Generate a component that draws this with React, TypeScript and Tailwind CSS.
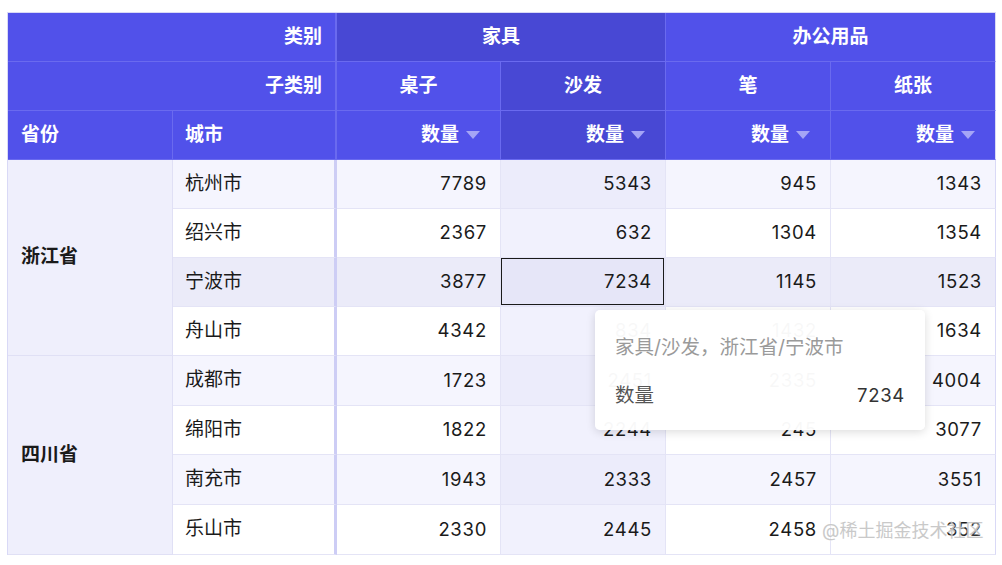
import React from 'react';

type City = { name: string; vals: number[] };
type Province = { name: string; cities: City[] };

const data: Province[] = [
  {
    name: '浙江省',
    cities: [
      { name: '杭州市', vals: [7789, 5343, 945, 1343] },
      { name: '绍兴市', vals: [2367, 632, 1304, 1354] },
      { name: '宁波市', vals: [3877, 7234, 1145, 1523] },
      { name: '舟山市', vals: [4342, 834, 1432, 1634] },
    ],
  },
  {
    name: '四川省',
    cities: [
      { name: '成都市', vals: [1723, 2451, 2335, 4004] },
      { name: '绵阳市', vals: [1822, 2244, 245, 3077] },
      { name: '南充市', vals: [1943, 2333, 2457, 3551] },
      { name: '乐山市', vals: [2330, 2445, 2458, 352] },
    ],
  },
];

const HOT_ROW = 2; // 宁波市
const HOT_COL = 1; // 沙发

const SortIcon = () => (
  <svg width="14" height="8" viewBox="0 0 14 8" className="ml-[7px] shrink-0">
    <path d="M0 0 H14 L7 8 Z" fill="#a5a5f6" />
  </svg>
);

const head = 'flex items-center text-white font-bold border-r border-b border-[#6a6aef]';
const hotHead = 'bg-[#4848d4]';
const coldHead = 'bg-[#5151ea]';

const App: React.FC = () => {
  return (
    <div
      className="relative w-[1002px] h-[565px] bg-white pt-[12px] pl-[7px] text-[19px] text-[#1a1a1a]"
      style={{ fontFamily: 'Inter, "Noto Sans CJK SC", sans-serif' }}
    >
      <div className="grid grid-cols-[165px_164px_164px_165px_165px_165px] grid-rows-[49px_49px_49px_49px_49px_49px_49px_50px_49px_50px_50px] border-l border-t border-[#d9d9f6] w-[989px]">
        {/* header row 1 */}
        <div className={`${head} ${coldHead} col-span-2 justify-end pr-[13px] border-r-2`}>类别</div>
        <div className={`${head} ${hotHead} col-span-2 justify-center`}>家具</div>
        <div className={`${head} ${coldHead} col-span-2 justify-center border-r-[#d9d9f6]`}>办公用品</div>

        {/* header row 2 */}
        <div className={`${head} ${coldHead} col-span-2 justify-end pr-[13px] border-r-2`}>子类别</div>
        {['桌子', '沙发', '笔', '纸张'].map((t, i) => (
          <div
            key={t}
            className={`${head} ${i === HOT_COL ? hotHead : coldHead} justify-center ${i === 3 ? 'border-r-[#d9d9f6]' : ''}`}
          >
            {t}
          </div>
        ))}

        {/* header row 3 */}
        <div className={`${head} ${coldHead} pl-[13px]`}>省份</div>
        <div className={`${head} ${coldHead} pl-[12px] border-r-2`}>城市</div>
        {[0, 1, 2, 3].map((i) => (
          <div
            key={i}
            className={`${head} ${i === HOT_COL ? hotHead : coldHead} justify-end pr-[20px] ${i === 3 ? 'border-r-[#d9d9f6]' : ''}`}
          >
            数量
            <SortIcon />
          </div>
        ))}

        {/* body */}
        {data.map((p, pi) => (
          <React.Fragment key={p.name}>
            <div
              className={`${pi === 0 ? 'row-start-4' : 'row-start-8'} row-span-4 col-start-1 flex items-center pl-[13px] font-semibold bg-[#efeffc] border-r border-b border-[#e0e0f5]`}
            >
              {p.name}
            </div>
            {p.cities.map((c, ci) => {
              const hotRow = pi === 0 && ci === HOT_ROW;
              const rowBg = hotRow ? 'bg-[#ebebf9]' : ci % 2 === 0 ? 'bg-[#f5f5fe]' : 'bg-white';
              return (
                <React.Fragment key={c.name}>
                  <div
                    className={`col-start-2 flex items-center pl-[12px] border-b border-r-[3px] border-b-[#e4e4f6] border-r-[#cdcdf5] ${rowBg}`}
                  >
                    {c.name}
                  </div>
                  {c.vals.map((v, vi) => {
                    const hotCol = vi === HOT_COL;
                    let bg = rowBg;
                    if (hotCol) bg = hotRow ? 'bg-[#e6e6f8]' : ci % 2 === 0 ? 'bg-[#ececfb]' : 'bg-[#f1f1fd]';
                    const selected = hotRow && hotCol;
                    return (
                      <div
                        key={vi}
                        className={`relative flex items-center justify-end pr-[13px] text-[18.5px] tracking-[0.7px] border-r border-b border-[#e4e4f6] ${bg} ${vi === 3 ? 'border-r-[#d9d9f6]' : ''}`}
                      >
                        {selected && (
                          <div className="absolute left-0 top-0 right-[1px] bottom-[1px] border-[1.5px] border-[#1a1a1a]" />
                        )}
                        {v}
                      </div>
                    );
                  })}
                </React.Fragment>
              );
            })}
          </React.Fragment>
        ))}
      </div>

      {/* tooltip */}
      <div className="absolute left-[595px] top-[310px] w-[330px] h-[120px] bg-white/[0.97] rounded-[5px] shadow-[0_2px_10px_rgba(0,0,0,0.14)] px-[20px] pt-[24px] text-[19.5px]">
        <div className="text-[#9a9a9a] leading-[26px]">家具/沙发，浙江省/宁波市</div>
        <div className="mt-[22px] flex justify-between leading-[26px]">
          <span className="text-[#555]">数量</span>
          <span className="text-[#333] text-[18.5px] tracking-[0.7px]">7234</span>
        </div>
      </div>

      {/* watermark */}
      <div className="absolute left-[822px] top-[517px] text-[18px] text-[#c4c4c4] opacity-90 [text-shadow:0_0_2px_#fff]">
        @稀土掘金技术社区
      </div>
    </div>
  );
};

export default App;
